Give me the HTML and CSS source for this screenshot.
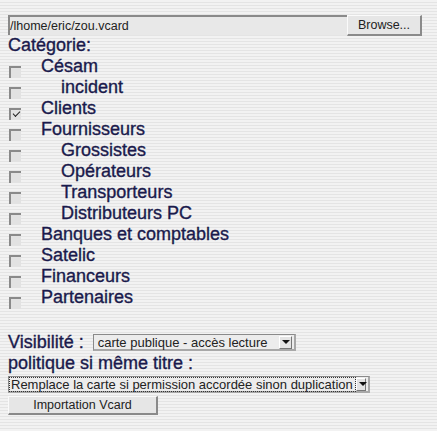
FILE: index.html
```html
<!DOCTYPE html>
<html lang="fr">
<head>
    <meta charset="UTF-8">
    <title>Importation Vcard</title>
    <link rel="stylesheet" href="styles.css">
</head>
<body>
    <form class="import">
        <div class="file">
            <span class="file-path">/lhome/eric/zou.vcard</span>
            <button type="button" class="btn browse">Browse...</button>
        </div>

        <div class="title">Catégorie:</div>
        <ul class="cats">
            <li><span class="check"></span><span class="name">Césam</span></li>
            <li><span class="check"></span><span class="name sub">incident</span></li>
            <li><span class="check on"></span><span class="name">Clients</span></li>
            <li><span class="check"></span><span class="name">Fournisseurs</span></li>
            <li><span class="check"></span><span class="name sub">Grossistes</span></li>
            <li><span class="check"></span><span class="name sub">Opérateurs</span></li>
            <li><span class="check"></span><span class="name sub">Transporteurs</span></li>
            <li><span class="check"></span><span class="name sub">Distributeurs PC</span></li>
            <li><span class="check"></span><span class="name">Banques et comptables</span></li>
            <li><span class="check"></span><span class="name">Satelic</span></li>
            <li><span class="check"></span><span class="name">Financeurs</span></li>
            <li><span class="check"></span><span class="name">Partenaires</span></li>
        </ul>

        <div class="row">
            <span class="title">Visibilité :</span>
            <span class="select vis">carte publique - accès lecture<span class="arrow"></span></span>
        </div>
        <div class="title">politique si même titre :</div>
        <span class="select policy"><span class="focus">Remplace la carte si permission accordée sinon duplication</span><span class="arrow"></span></span>
        <div>
            <button type="button" class="btn submit">Importation Vcard</button>
        </div>
    </form>
</body>
</html>
```

FILE: styles.css
```css
html {
    background: repeating-linear-gradient(to bottom, #f2f2f2 0, #f2f2f2 2px, #e4e4e4 2px, #e4e4e4 3px);
    min-height: 100%;
}
body {
    margin: 0;
    padding: 15px 8px 0 8px;
    font-family: "Liberation Sans", Arial, sans-serif;
    color: #1a1a4c;
}
.file {
    display: flex;
    width: 414px;
    height: 20px;
}
.file-path {
    flex: 1;
    background: #e8e8e8;
    border-top: 2px solid #8a8a8a;
    border-left: 2px solid #8a8a8a;
    font-size: 12.5px;
    color: #222;
    line-height: 18px;
}
.btn {
    font-family: "Liberation Sans", Arial, sans-serif;
    font-size: 12.5px;
    color: #222;
    background: #e6e6e6;
    border: none;
    border-right: 2px solid #8a8a8a;
    border-bottom: 2px solid #8a8a8a;
    border-top: 1px solid #fafafa;
    border-left: 1px solid #fafafa;
    padding: 0;
    cursor: pointer;
}
.browse {
    width: 75px;
    height: 21px;
}
.title {
    font-size: 18px;
    line-height: 21px;
    -webkit-text-stroke: 0.35px #1a1a4c;
}
.cats {
    list-style: none;
    margin: 0;
    padding: 0;
}
.cats li {
    display: flex;
    height: 21px;
    align-items: flex-start;
}
.check {
    width: 10px;
    height: 10px;
    margin: 10px 0 0 1px;
    background: #e2e2e2;
    border-top: 2px solid #8a8a8a;
    border-left: 2px solid #8a8a8a;
    position: relative;
}
.check.on::after {
    content: "";
    position: absolute;
    left: 2px;
    top: 1px;
    width: 6px;
    height: 3px;
    border-left: 1.5px solid #222;
    border-bottom: 1.5px solid #222;
    transform: rotate(-45deg);
}
.name {
    font-size: 18px;
    line-height: 21px;
    margin-left: 20px;
    -webkit-text-stroke: 0.35px #1a1a4c;
}
.name.sub {
    margin-left: 40px;
}
.row {
    display: flex;
    align-items: center;
    margin-top: 24px;
}
.row .title {
    margin-right: 9px;
}
.select {
    display: inline-flex;
    align-items: center;
    justify-content: space-between;
    height: 17px;
    background: #ececec;
    border-top: 1px solid #8a8a8a;
    border-left: 1px solid #8a8a8a;
    border-right: 2px solid #a8a8a8;
    border-bottom: 2px solid #a8a8a8;
    font-size: 13px;
    white-space: nowrap;
    color: #222;
    box-sizing: border-box;
}
.vis {
    width: 203px;
    padding-left: 4px;
    padding-right: 2px;
}
.policy {
    width: 362px;
    margin-top: 2px;
    padding-right: 2px;
}
.focus {
    border: 1px dotted #333;
    padding: 0 2px 0 1px;
    line-height: 13px;
}
.arrow {
    width: 11px;
    height: 11px;
    background: #e4e4e4;
    border-right: 1px solid #777;
    border-bottom: 1px solid #777;
    border-top: 1px solid #fff;
    border-left: 1px solid #fff;
    position: relative;
}
.arrow::after {
    content: "";
    position: absolute;
    left: 2px;
    top: 3px;
    border-left: 4px solid transparent;
    border-right: 4px solid transparent;
    border-top: 4px solid #111;
}
.submit {
    width: 150px;
    height: 19px;
    margin-top: 3px;
}
```
